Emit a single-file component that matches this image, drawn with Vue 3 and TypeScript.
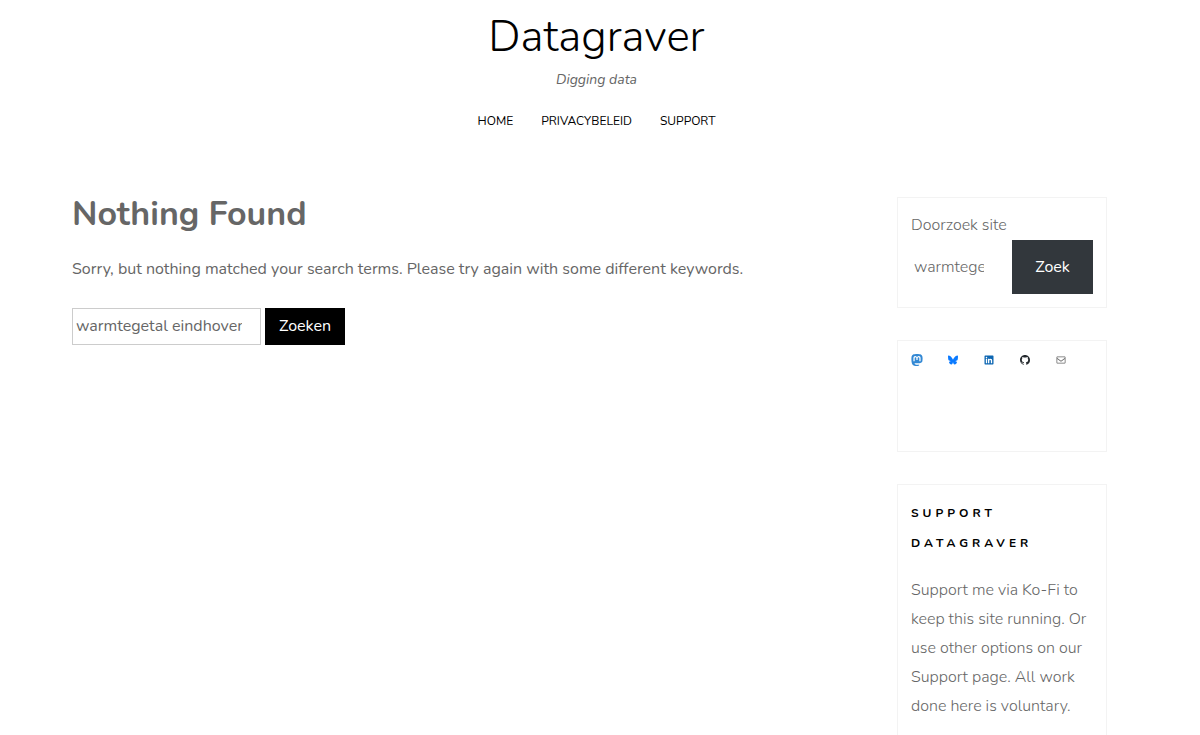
<script setup lang="ts">
import { ref } from 'vue'

interface SocialLink {
  name: string
  tone: string
  path: string
}

const query = ref('warmtegetal eindhoven')

const menu = ['Home', 'Privacybeleid', 'Support']

const socials: SocialLink[] = [
  {
    name: 'Mastodon',
    tone: 'mastodon',
    path: 'M23.193 7.879c0-5.206-3.411-6.732-3.411-6.732C18.062.357 15.108.025 12.041 0h-.076c-3.068.025-6.02.357-7.74 1.147 0 0-3.411 1.526-3.411 6.732 0 1.192-.023 2.618.015 4.129.124 5.092.934 10.109 5.641 11.355 2.17.574 4.034.695 5.535.612 2.722-.15 4.25-.972 4.25-.972l-.09-1.975s-1.945.613-4.129.539c-2.165-.074-4.449-.233-4.799-2.891a5.499 5.499 0 0 1-.048-.745s2.125.52 4.817.643c1.646.075 3.19-.097 4.758-.283 3.007-.359 5.625-2.212 5.954-3.905.517-2.665.475-6.507.475-6.507zm-4.024 6.709h-2.497V8.469c0-1.29-.543-1.944-1.628-1.944-1.2 0-1.802.776-1.802 2.312v3.349h-2.483v-3.35c0-1.536-.602-2.312-1.802-2.312-1.085 0-1.628.655-1.628 1.944v6.119H4.832V8.284c0-1.289.328-2.313.987-3.07.68-.758 1.569-1.146 2.674-1.146 1.278 0 2.246.491 2.886 1.474L12 6.585l.622-1.043c.64-.983 1.608-1.474 2.886-1.474 1.104 0 1.994.388 2.674 1.146.658.757.986 1.781.986 3.07v6.304z',
  },
  {
    name: 'Bluesky',
    tone: 'bluesky',
    path: 'M6.3 4.2c2.3 1.7 4.8 5.3 5.7 7.2.9-1.9 3.4-5.4 5.7-7.2 1.7-1.3 4.3-2.2 4.3.9s-.4 5.2-.6 5.9c-.7 2.6-3.3 3.2-5.6 2.8 4 .7 5.1 3 2.9 5.3-5 5.2-6.7-2.8-6.7-2.8s-1.7 8-6.7 2.8c-2.2-2.3-1.2-4.6 2.9-5.3-2.3.4-4.9-.3-5.6-2.8C2.4 10.3 2 5.7 2 5.1c0-3.1 2.7-2.1 4.3-.9z',
  },
  {
    name: 'LinkedIn',
    tone: 'linkedin',
    path: 'M19.7 3H4.3C3.582 3 3 3.582 3 4.3v15.4c0 .718.582 1.3 1.3 1.3h15.4c.718 0 1.3-.582 1.3-1.3V4.3c0-.718-.582-1.3-1.3-1.3zM8.339 18.338H5.667v-8.59h2.672v8.59zM7.004 8.574a1.548 1.548 0 1 1 0-3.096 1.548 1.548 0 0 1 0 3.096zm11.335 9.764H15.67v-4.177c0-.996-.017-2.278-1.387-2.278-1.389 0-1.601 1.086-1.601 2.206v4.249h-2.667v-8.59h2.559v1.174h.037c.356-.675 1.227-1.387 2.526-1.387 2.703 0 3.203 1.779 3.203 4.092v4.711z',
  },
  {
    name: 'GitHub',
    tone: 'github',
    path: 'M12 2C6.477 2 2 6.477 2 12c0 4.419 2.865 8.166 6.839 9.489.5.09.682-.218.682-.484 0-.236-.009-.866-.014-1.699-2.782.602-3.369-1.34-3.369-1.34-.455-1.157-1.11-1.465-1.11-1.465-.909-.62.069-.608.069-.608 1.004.071 1.532 1.03 1.532 1.03.891 1.529 2.341 1.089 2.91.833.091-.647.349-1.086.635-1.337-2.22-.251-4.555-1.111-4.555-4.943 0-1.091.39-1.984 1.03-2.682-.103-.254-.447-1.27.097-2.646 0 0 .84-.269 2.75 1.025A9.548 9.548 0 0 1 12 6.836c.85.004 1.705.114 2.504.336 1.909-1.294 2.748-1.025 2.748-1.025.546 1.376.202 2.394.1 2.646.64.699 1.026 1.591 1.026 2.682 0 3.841-2.337 4.687-4.565 4.935.359.307.679.917.679 1.852 0 1.335-.012 2.415-.012 2.741 0 .269.18.579.688.481A9.997 9.997 0 0 0 22 12c0-5.523-4.477-10-10-10z',
  },
  {
    name: 'Mail',
    tone: 'mail',
    path: 'M19 5H5c-1.1 0-2 .9-2 2v10c0 1.1.9 2 2 2h14c1.1 0 2-.9 2-2V7c0-1.1-.9-2-2-2zm.5 12c0 .3-.2.5-.5.5H5c-.3 0-.5-.2-.5-.5V9.8l7.5 5.6 7.5-5.6V17zm0-9.1L12 13.6 4.5 7.9V7c0-.3.2-.5.5-.5h14c.3 0 .5.2.5.5v.9z',
  },
]
</script>

<template>
  <div class="page">
    <header class="masthead">
      <a class="site-title" href="#">Datagraver</a>
      <p class="tagline">Digging data</p>
      <nav class="menu" aria-label="Menu">
        <a v-for="item in menu" :key="item" href="#">{{ item }}</a>
      </nav>
    </header>

    <div class="columns">
      <main>
        <h1>Nothing Found</h1>
        <p class="notice">
          Sorry, but nothing matched your search terms. Please try again with some different keywords.
        </p>
        <form class="search" role="search" @submit.prevent>
          <input v-model="query" type="text" aria-label="Zoeken naar" />
          <button type="submit">Zoeken</button>
        </form>
      </main>

      <aside>
        <section class="widget">
          <form class="site-search" role="search" @submit.prevent>
            <label for="site-query">Doorzoek site</label>
            <div class="row">
              <input id="site-query" v-model="query" type="text" />
              <button type="submit">Zoek</button>
            </div>
          </form>
        </section>

        <section class="widget social">
          <ul>
            <li v-for="link in socials" :key="link.name">
              <a href="#" :class="link.tone" :aria-label="link.name">
                <svg viewBox="0 0 24 24" aria-hidden="true"><path :d="link.path" /></svg>
              </a>
            </li>
          </ul>
        </section>

        <section class="widget support">
          <h2>Support Datagraver</h2>
          <p>
            Support me via Ko-Fi to keep this site running. Or use other options on our Support page.
            All work done here is voluntary.
          </p>
        </section>
      </aside>
    </div>
  </div>
</template>

<style>
html,
body {
  margin: 0;
  background: #fff;
}
</style>

<style scoped>
.page {
  box-sizing: border-box;
  height: 100vh;
  overflow: hidden;
  font-family: Nunito, Lato, 'Open Sans', sans-serif;
  font-size: 16px;
  line-height: 29px;
  color: #666;
}

a {
  color: inherit;
  text-decoration: none;
}

h1,
h2,
p,
ul {
  margin: 0;
  padding: 0;
}

input,
button {
  box-sizing: border-box;
  min-width: 0;
  margin: 0;
  border-radius: 0;
  font: inherit;
}

.masthead {
  display: flex;
  flex-direction: column;
  align-items: center;
  padding: 9px 7px 0 0;
}

.site-title {
  font-size: 44px;
  font-weight: 300;
  line-height: 56px;
  color: #000;
}

.tagline {
  font-size: 14px;
  font-style: italic;
  line-height: 30px;
}

.menu {
  display: flex;
  gap: 28px;
  padding-top: 11px;
  font-size: 12px;
  line-height: 30px;
  text-transform: uppercase;
  color: #000;
}

.columns {
  display: grid;
  grid-template-columns: 1fr 210px;
  gap: 32px;
  padding: 61px 93px 0 72px;
}

h1 {
  font-size: 34px;
  font-weight: 700;
  line-height: 34px;
}

.notice {
  padding: 24px 0;
}

.search {
  display: flex;
  gap: 4px;
}

.search input {
  width: 189px;
  height: 37px;
  padding: 0 18px 2px 3px;
  border: 1px solid #ccc;
  color: #666;
}

.search button {
  width: 80px;
  height: 37px;
  padding: 0;
  border: 0;
  background: #000;
  color: #fff;
}

aside {
  display: flex;
  flex-direction: column;
  gap: 32px;
  font-weight: 300;
}

.widget {
  padding: 13px;
  border: 1px solid #f3f3f3;
}

.site-search label {
  display: block;
}

.row {
  display: flex;
  gap: 8px;
}

.row input {
  flex: 1;
  padding: 0 20px 0 3px;
  border: 0;
  background: transparent;
  color: #666;
}

.row button {
  width: 81px;
  height: 54px;
  padding: 0;
  border: 0;
  background: #32373c;
  color: #fff;
  font-weight: 400;
}

.social {
  min-height: 84px;
}

.social ul {
  display: flex;
  gap: 24px;
  list-style: none;
}

.social a {
  display: block;
}

.social svg {
  display: block;
  width: 12px;
  height: 12px;
  fill: currentColor;
}

.mastodon {
  color: #3288d4;
}

.bluesky {
  color: #0a7aff;
}

.linkedin {
  color: #0d66b2;
}

.github {
  color: #24292d;
}

.mail {
  color: #666;
}

.support {
  padding-bottom: 32px;
}

.support h2 {
  padding-bottom: 18px;
  font-size: 12px;
  font-weight: 700;
  line-height: 30px;
  letter-spacing: 4px;
  text-transform: uppercase;
  color: #000;
}
</style>
